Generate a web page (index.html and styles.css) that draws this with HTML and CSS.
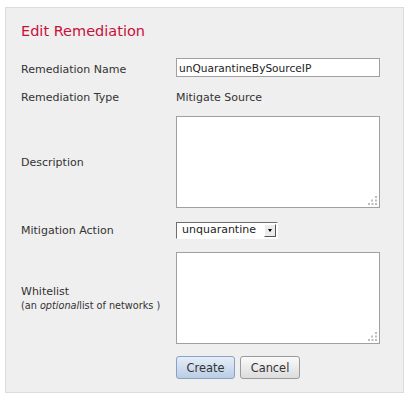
FILE: index.html
```html
<!DOCTYPE html>
<html lang="en">
<head>
  <meta charset="UTF-8">
  <title>Edit Remediation</title>
  <link rel="stylesheet" href="styles.css">
</head>
<body>
  <div class="panel">
    <h1>Edit Remediation</h1>
    <form class="form">
      <label class="label first" for="name">Remediation Name</label>
      <div class="field"><input id="name" class="text" type="text" value="unQuarantineBySourceIP"></div>

      <div class="label">Remediation Type</div>
      <div class="field value">Mitigate Source</div>

      <label class="label" for="desc">Description</label>
      <div class="field">
        <span class="area-wrap">
          <textarea id="desc" class="area"></textarea>
          <svg class="grip" width="9" height="9" viewBox="0 0 9 9"><g fill="#bdbdbd"><rect x="7" y="0" width="2" height="2"/><rect x="3" y="3.5" width="2" height="2"/><rect x="7" y="3.5" width="2" height="2"/><rect x="0" y="7" width="2" height="2"/><rect x="3.5" y="7" width="2" height="2"/><rect x="7" y="7" width="2" height="2"/></g></svg>
        </span>
      </div>

      <label class="label" for="action">Mitigation Action</label>
      <div class="field">
        <span class="select" id="action">
          <span class="select-text">unquarantine</span>
          <span class="select-btn"><span class="arrow"></span></span>
        </span>
      </div>

      <label class="label" for="white">Whitelist<br><small>(an <em>optional</em>list of networks )</small></label>
      <div class="field">
        <span class="area-wrap">
          <textarea id="white" class="area"></textarea>
          <svg class="grip" width="9" height="9" viewBox="0 0 9 9"><g fill="#bdbdbd"><rect x="7" y="0" width="2" height="2"/><rect x="3" y="3.5" width="2" height="2"/><rect x="7" y="3.5" width="2" height="2"/><rect x="0" y="7" width="2" height="2"/><rect x="3.5" y="7" width="2" height="2"/><rect x="7" y="7" width="2" height="2"/></g></svg>
        </span>
      </div>

      <div></div>
      <div class="field buttons">
        <button type="button" class="btn primary">Create</button>
        <button type="button" class="btn cancel">Cancel</button>
      </div>
    </form>
  </div>
</body>
</html>
```

FILE: styles.css
```css
body {
  margin: 0;
  background: #fff;
  font-family: "DejaVu Sans", Verdana, sans-serif;
  font-size: 11px;
  color: #333;
}
.panel {
  box-sizing: border-box;
  margin: 7px 0 0 5px;
  width: 399px;
  height: 386px;
  padding: 13px 0 0 15px;
  background: #efefef;
  border: 1px solid #dcdcdc;
}
h1 {
  margin: 0;
  font-family: "DejaVu Sans", Verdana, sans-serif;
  font-weight: normal;
  font-size: 14.5px;
  line-height: 20px;
  color: #c8103a;
}
.form {
  display: grid;
  grid-template-columns: 155px 210px;
  grid-template-rows: 19px 15px 92px 20px 92px 23px;
  row-gap: 12px;
  margin-top: 17px;
  align-items: center;
}
.label {
  padding-top: 2px;
  line-height: 14px;
}
.first {
  padding-top: 4px;
}
.label small {
  font-size: 9.7px;
}
.field {
  display: flex;
  align-items: center;
}
.text {
  box-sizing: border-box;
  width: 204px;
  height: 19px;
  margin: 0;
  padding: 1px 2px 0;
  border: 1px solid #a0a0a0;
  background: #fff;
  font-family: "DejaVu Sans", Verdana, sans-serif;
  font-size: 10.6px;
  color: #222;
}
.value {
  padding-top: 1px;
}
.area-wrap {
  position: relative;
  display: block;
}
.area {
  display: block;
  box-sizing: border-box;
  width: 204px;
  height: 92px;
  margin: 0;
  border: 1px solid #a0a0a0;
  background: #fff;
  resize: none;
}
.grip {
  position: absolute;
  right: 3px;
  bottom: 3px;
}
.select {
  box-sizing: border-box;
  display: flex;
  align-items: center;
  width: 102px;
  height: 17px;
  border: 1px solid #fff;
  border-top-color: #6f6f6f;
  border-left-color: #6f6f6f;
  background: #fff;
}
.select-text {
  flex: 1;
  padding-left: 5px;
  line-height: 14px;
  font-size: 11px;
  color: #222;
}
.select-btn {
  display: flex;
  align-items: center;
  justify-content: center;
  box-sizing: border-box;
  width: 12px;
  height: 13px;
  margin-right: 1px;
  background: #ececec;
  border: 1px solid #fff;
  border-right-color: #555;
  border-bottom-color: #555;
}
.arrow {
  width: 0;
  height: 0;
  margin-top: 1px;
  border-left: 2.5px solid transparent;
  border-right: 2.5px solid transparent;
  border-top: 3px solid #000;
}
.buttons {
  gap: 5px;
}
.btn {
  box-sizing: border-box;
  height: 23px;
  padding: 0;
  border: 1px solid #9a9a9a;
  border-radius: 3px;
  background: linear-gradient(#fafafa, #dcdcdc);
  font-family: "DejaVu Sans", Verdana, sans-serif;
  font-size: 11.4px;
  color: #333;
}
.primary {
  width: 59px;
  border-color: #8aa2c0;
  background: linear-gradient(#e6eef8, #b9cde6);
}
.cancel {
  width: 60px;
}
```
